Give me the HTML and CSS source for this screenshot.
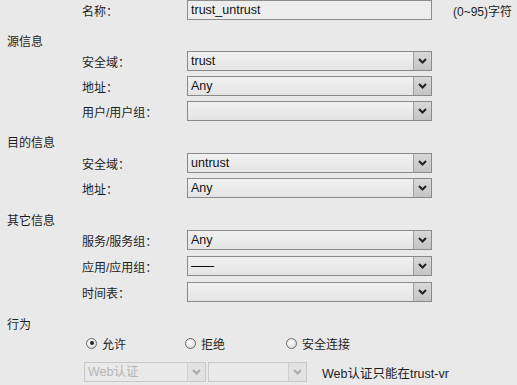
FILE: index.html
```html
<!DOCTYPE html>
<html>
<head>
<meta charset="utf-8">
<link rel="stylesheet" href="styles.css">
</head>
<body>
<div class="page">
  <div class="row row-name">
    <span class="label">名称：</span>
    <div class="textbox">trust_untrust</div>
    <span class="hint">(0~95)字符</span>
  </div>

  <div class="heading h-src">源信息</div>
  <div class="row r-first">
    <span class="label">安全域：</span>
    <div class="select"><span class="val">trust</span><span class="btn"><svg width="9" height="6" viewBox="0 0 9 6"><path d="M1 1 L4.5 4.5 L8 1" fill="none" stroke="#222" stroke-width="2"/></svg></span></div>
  </div>
  <div class="row">
    <span class="label">地址：</span>
    <div class="select"><span class="val">Any</span><span class="btn"><svg width="9" height="6" viewBox="0 0 9 6"><path d="M1 1 L4.5 4.5 L8 1" fill="none" stroke="#222" stroke-width="2"/></svg></span></div>
  </div>
  <div class="row">
    <span class="label">用户/用户组：</span>
    <div class="select"><span class="val"></span><span class="btn"><svg width="9" height="6" viewBox="0 0 9 6"><path d="M1 1 L4.5 4.5 L8 1" fill="none" stroke="#222" stroke-width="2"/></svg></span></div>
  </div>

  <div class="heading h-dst">目的信息</div>
  <div class="row r-first2">
    <span class="label">安全域：</span>
    <div class="select"><span class="val">untrust</span><span class="btn"><svg width="9" height="6" viewBox="0 0 9 6"><path d="M1 1 L4.5 4.5 L8 1" fill="none" stroke="#222" stroke-width="2"/></svg></span></div>
  </div>
  <div class="row">
    <span class="label">地址：</span>
    <div class="select"><span class="val">Any</span><span class="btn"><svg width="9" height="6" viewBox="0 0 9 6"><path d="M1 1 L4.5 4.5 L8 1" fill="none" stroke="#222" stroke-width="2"/></svg></span></div>
  </div>

  <div class="heading h-other">其它信息</div>
  <div class="row r-first">
    <span class="label">服务/服务组：</span>
    <div class="select"><span class="val">Any</span><span class="btn"><svg width="9" height="6" viewBox="0 0 9 6"><path d="M1 1 L4.5 4.5 L8 1" fill="none" stroke="#222" stroke-width="2"/></svg></span></div>
  </div>
  <div class="row r-wide">
    <span class="label">应用/应用组：</span>
    <div class="select"><span class="val dash">——</span><span class="btn"><svg width="9" height="6" viewBox="0 0 9 6"><path d="M1 1 L4.5 4.5 L8 1" fill="none" stroke="#222" stroke-width="2"/></svg></span></div>
  </div>
  <div class="row r-wide">
    <span class="label">时间表：</span>
    <div class="select"><span class="val"></span><span class="btn"><svg width="9" height="6" viewBox="0 0 9 6"><path d="M1 1 L4.5 4.5 L8 1" fill="none" stroke="#222" stroke-width="2"/></svg></span></div>
  </div>

  <div class="heading h-act">行为</div>
  <div class="radios">
    <span class="radio r1"><span class="dot checked"></span>允许</span>
    <span class="radio r2"><span class="dot"></span>拒绝</span>
    <span class="radio r3"><span class="dot"></span>安全连接</span>
  </div>
  <div class="auth">
    <div class="select dis s-web"><span class="val">Web认证</span><span class="btn"><svg width="9" height="6" viewBox="0 0 9 6"><path d="M1 1 L4.5 4.5 L8 1" fill="none" stroke="#aaa" stroke-width="2"/></svg></span></div>
    <div class="select dis s-two"><span class="val"></span><span class="btn"><svg width="9" height="6" viewBox="0 0 9 6"><path d="M1 1 L4.5 4.5 L8 1" fill="none" stroke="#aaa" stroke-width="2"/></svg></span></div>
    <span class="note">Web认证只能在trust-vr</span>
  </div>
</div>
</body>
</html>
```

FILE: styles.css
```css
html, body {
  margin: 0;
  padding: 0;
  background: #e9e9e9;
}
body {
  font-family: "Liberation Sans", "Noto Sans CJK SC", sans-serif;
  font-size: 12px;
  color: #1e1e1e;
  width: 517px;
  height: 385px;
  overflow: hidden;
}
.page {
  display: flex;
  flex-direction: column;
}
.row {
  display: flex;
  align-items: center;
  height: 20px;
  margin-top: 5px;
  white-space: nowrap;
}
.row-name { margin-top: 0; }
.r-first { margin-top: 1px; }
.r-first2 { margin-top: 2px; }
.r-wide { margin-top: 6px; }
.label {
  width: 105px;
  padding-left: 82px;
  flex: none;
}
.textbox {
  border: 1px solid #8c8c8c;
  background: #ededed;
  line-height: 18px;
  padding-left: 3px;
  box-sizing: border-box;
  width: 245px;
  height: 20px;
  color: #111;
  font-size: 12.5px;
}
.hint {
  margin-left: 21px;
}
.heading {
  height: 16px;
  line-height: 16px;
  padding-left: 7px;
}
.h-src { margin-top: 14px; }
.h-dst { margin-top: 14px; }
.h-other { margin-top: 15px; }
.h-act { margin-top: 15px; }
.select {
  width: 245px;
  height: 20px;
  box-sizing: border-box;
  border: 1px solid #8a8a8a;
  background: linear-gradient(#f1f1f1, #e4e4e4);
  display: flex;
  align-items: stretch;
}
.val {
  flex: 1;
  padding-left: 3px;
  line-height: 18px;
  font-size: 12.5px;
  color: #111;
}
.val.dash {
  font-size: 12px;
  letter-spacing: -1px;
}
.btn {
  width: 17px;
  flex: none;
  border-left: 1px solid #a0a0a0;
  background: linear-gradient(#d8d8d8, #c4c4c4);
  display: flex;
  align-items: center;
  justify-content: center;
}
.radios {
  display: flex;
  align-items: center;
  height: 16px;
  margin-top: 2px;
  white-space: nowrap;
}
.radio {
  display: flex;
  align-items: center;
  gap: 5px;
}
.r1 { margin-left: 86px; width: 99px; }
.r2 { width: 101px; }
.dot {
  width: 11px;
  height: 11px;
  box-sizing: border-box;
  border: 1px solid #6a6a6a;
  border-radius: 50%;
  background: radial-gradient(circle at 40% 40%, #ffffff, #d0d0d0);
  position: relative;
}
.dot.checked::after {
  content: "";
  position: absolute;
  left: 2.5px;
  top: 2.5px;
  width: 4px;
  height: 4px;
  border-radius: 50%;
  background: #222;
}
.auth {
  display: flex;
  align-items: center;
  margin-top: 11px;
  margin-left: 84px;
  white-space: nowrap;
}
.select.dis {
  border-color: #c9c9c9;
  background: #e9e9e9;
}
.select.dis .val { color: #b5b5b5; }
.select.dis .btn {
  border-left-color: #d0d0d0;
  background: #e2e2e2;
}
.s-web { width: 122px; }
.s-two { width: 99px; margin-left: 2px; }
.note {
  margin-left: 15px;
  font-size: 12.5px;
}
```
